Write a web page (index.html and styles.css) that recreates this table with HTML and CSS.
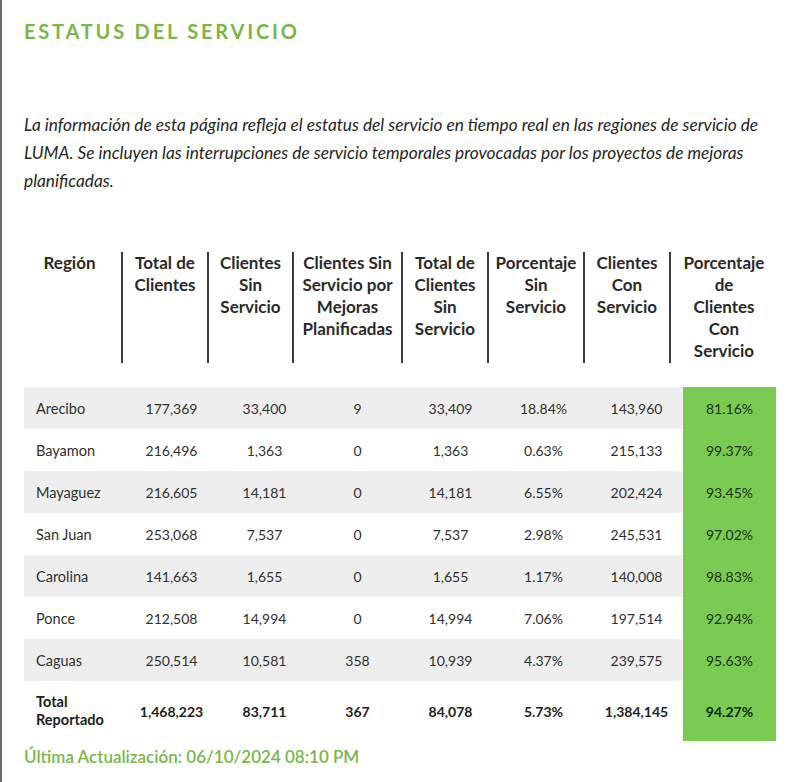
FILE: index.html
```html
<!DOCTYPE html>
<html lang="es">
<head>
<meta charset="utf-8">
<title>Estatus del servicio</title>
<link rel="stylesheet" href="styles.css">
</head>
<body>
<div class="page">
  <h1 class="title">ESTATUS DEL SERVICIO</h1>
  <p class="intro">La información de esta página refleja el estatus del servicio en tiempo real en las regiones de servicio de<br>LUMA. Se incluyen las interrupciones de servicio temporales provocadas por los proyectos de mejoras<br>planificadas.</p>

  <div class="head">
    <div class="hcell">Región</div>
    <div class="hcell sep">Total de<br>Clientes</div>
    <div class="hcell sep">Clientes<br>Sin<br>Servicio</div>
    <div class="hcell sep">Clientes Sin<br>Servicio por<br>Mejoras<br>Planificadas</div>
    <div class="hcell sep">Total de<br>Clientes<br>Sin<br>Servicio</div>
    <div class="hcell sep">Porcentaje<br>Sin<br>Servicio</div>
    <div class="hcell sep">Clientes<br>Con<br>Servicio</div>
    <div class="hcell sep">Porcentaje<br>de<br>Clientes<br>Con<br>Servicio</div>
  </div>

  <div class="data">
    <div class="row odd"><span class="name">Arecibo</span><span>177,369</span><span>33,400</span><span>9</span><span>33,409</span><span>18.84%</span><span>143,960</span><span class="pct">81.16%</span></div>
    <div class="row"><span class="name">Bayamon</span><span>216,496</span><span>1,363</span><span>0</span><span>1,363</span><span>0.63%</span><span>215,133</span><span class="pct">99.37%</span></div>
    <div class="row odd"><span class="name">Mayaguez</span><span>216,605</span><span>14,181</span><span>0</span><span>14,181</span><span>6.55%</span><span>202,424</span><span class="pct">93.45%</span></div>
    <div class="row"><span class="name">San Juan</span><span>253,068</span><span>7,537</span><span>0</span><span>7,537</span><span>2.98%</span><span>245,531</span><span class="pct">97.02%</span></div>
    <div class="row odd"><span class="name">Carolina</span><span>141,663</span><span>1,655</span><span>0</span><span>1,655</span><span>1.17%</span><span>140,008</span><span class="pct">98.83%</span></div>
    <div class="row"><span class="name">Ponce</span><span>212,508</span><span>14,994</span><span>0</span><span>14,994</span><span>7.06%</span><span>197,514</span><span class="pct">92.94%</span></div>
    <div class="row odd"><span class="name">Caguas</span><span>250,514</span><span>10,581</span><span>358</span><span>10,939</span><span>4.37%</span><span>239,575</span><span class="pct">95.63%</span></div>
    <div class="row total"><span class="name">Total<br>Reportado</span><span>1,468,223</span><span>83,711</span><span>367</span><span>84,078</span><span>5.73%</span><span>1,384,145</span><span class="pct">94.27%</span></div>
  </div>

  <p class="updated">Última Actualización: 06/10/2024 08:10 PM</p>
</div>
</body>
</html>
```

FILE: styles.css
```css
* { box-sizing: border-box; }

html, body {
  margin: 0;
  padding: 0;
  background: #ffffff;
}

.page {
  min-height: 782px;
  border-left: 2px solid #6a6a6a;
  padding: 19px 0 0 22px;
  font-family: Lato, "Open Sans", sans-serif;
  color: #262626;
}

.title {
  margin: 0;
  font-size: 20px;
  line-height: 24px;
  font-weight: 700;
  letter-spacing: 2.8px;
  color: #7ab648;
}

.intro {
  margin: 68px 0 0 0;
  font-size: 17.3px;
  line-height: 28px;
  font-style: italic;
  color: #262626;
  white-space: nowrap;
}

.head {
  display: grid;
  grid-template-columns: 97px 86px 85px 109px 86px 96px 86px 108px;
  margin-top: 57px;
  height: 111px;
}

.hcell {
  text-align: center;
  font-size: 17px;
  line-height: 22px;
  font-weight: 700;
  color: #2a2a2a;
}

.hcell:first-child {
  padding-right: 6px;
}

.hcell.sep {
  border-left: 2px solid #3c3c3c;
}

.data {
  margin-top: 24px;
  width: 752px;
}

.row {
  display: grid;
  grid-template-columns: 101px repeat(7, 93px);
  height: 42px;
  align-items: stretch;
}

.row.odd {
  background: #eeeeee;
}

.row span {
  display: flex;
  align-items: center;
  justify-content: center;
  font-size: 14px;
  color: #303030;
}

.row .name {
  justify-content: flex-start;
  padding-left: 12px;
  font-size: 14.5px;
}

.row .pct {
  background: #7acb52;
  color: #1e2e16;
}

.row.total {
  height: 60px;
}

.row.total span {
  font-weight: 700;
  color: #1e1e1e;
}

.row.total .name {
  line-height: 18px;
}

.row.total .pct {
  color: #14240c;
}

.updated {
  margin: 4px 0 0 0;
  font-size: 17px;
  line-height: 24px;
  font-weight: 600;
  color: #7ab648;
}
```
